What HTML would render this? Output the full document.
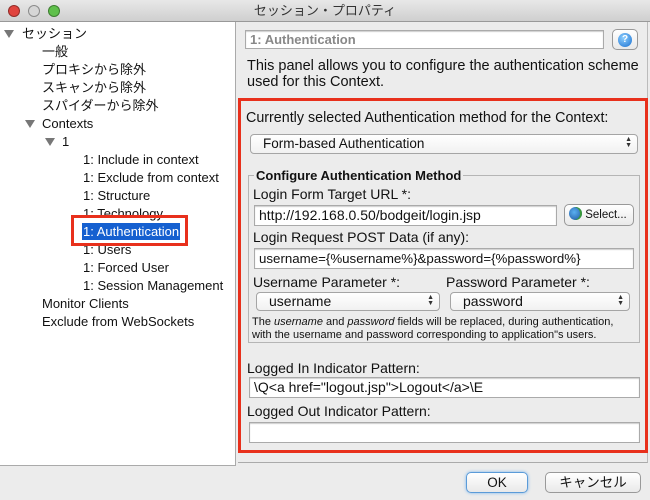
<!DOCTYPE html>
<html><head><meta charset="utf-8"><style>
*{margin:0;padding:0;box-sizing:border-box}
body{width:650px;height:500px;background:#ececec;font-family:"Liberation Sans","Noto Sans CJK JP",sans-serif;font-size:12.5px;color:#111;position:relative;overflow:hidden}
.a{position:absolute;white-space:nowrap}
.title{left:0;top:0;width:650px;height:22px;background:linear-gradient(#e8e8e8,#cfcfcf);border-bottom:1px solid #999;text-align:center;line-height:22px;font-size:13px;color:#333}
.dot{top:5px;width:12px;height:12px;border-radius:50%;border:1px solid rgba(0,0,0,.35)}
.tree{left:0;top:22px;width:236px;height:444px;background:#fff;border-right:1px solid #aaa;border-bottom:1px solid #aaa}
.t{position:absolute;font-size:13px;line-height:18px;white-space:nowrap}
.tri{position:absolute;width:0;height:0;border-left:5px solid transparent;border-right:5px solid transparent;border-top:8px solid #777}
.field{background:#fff;border:1px solid #aaa;box-shadow:inset 0 1px 1px #ccc;padding-left:4px;line-height:19px;font-size:14px}
.combo{background:linear-gradient(#fff,#f1f1f1);border:1px solid #a5a5a5;border-radius:4px;line-height:18px;font-size:13.5px;padding-left:12px}
.arr{position:absolute;right:5px;top:2px;font-size:7px;line-height:6px;color:#333}
.btn{background:linear-gradient(#fff,#e9e9e9);border:1px solid #999;border-radius:5px;text-align:center;font-size:13.5px}
.l{font-size:14px}
</style></head><body>
<div class="a title">セッション・プロパティ</div>
<div class="a dot" style="left:8px;background:#e0443e"></div>
<div class="a dot" style="left:28px;background:#d6d6d6"></div>
<div class="a dot" style="left:48px;background:#5fc04b"></div>

<div class="a tree">
<div class="tri" style="left:4px;top:8px"></div><div class="t" style="left:22px;top:3px">セッション</div>
<div class="t" style="left:42px;top:21px">一般</div>
<div class="t" style="left:42px;top:39px">プロキシから除外</div>
<div class="t" style="left:42px;top:57px">スキャンから除外</div>
<div class="t" style="left:42px;top:75px">スパイダーから除外</div>
<div class="tri" style="left:25px;top:98px"></div><div class="t" style="left:42px;top:93px">Contexts</div>
<div class="tri" style="left:45px;top:116px"></div><div class="t" style="left:62px;top:111px">1</div>
<div class="t" style="left:83px;top:129px">1: Include in context</div>
<div class="t" style="left:83px;top:147px">1: Exclude from context</div>
<div class="t" style="left:83px;top:165px">1: Structure</div>
<div class="t" style="left:83px;top:183px">1: Technology</div>
<div class="t" style="left:82px;top:201px;background:#1560d0;color:#fff;padding:0 1px;height:17px;line-height:17px">1: Authentication</div>
<div class="t" style="left:83px;top:219px">1: Users</div>
<div class="t" style="left:83px;top:237px">1: Forced User</div>
<div class="t" style="left:83px;top:255px">1: Session Management</div>
<div class="t" style="left:42px;top:273px">Monitor Clients</div>
<div class="t" style="left:42px;top:291px">Exclude from WebSockets</div>
<div class="a" style="left:71px;top:193px;width:117px;height:31px;border:3px solid #e8301c"></div>
</div>

<div class="a" style="left:238px;top:22px;width:410px;height:441px;border-bottom:1px solid #aaa;border-right:1px solid #bbb"></div>
<div class="a field" style="left:245px;top:30px;width:359px;height:19px;color:#888;font-weight:bold;line-height:17px;font-size:13px">1: Authentication</div>
<div class="a btn" style="left:612px;top:29px;width:26px;height:21px;border-radius:5px"><div style="margin:3px auto;width:14px;height:14px;border-radius:50%;background:radial-gradient(circle at 40% 35%,#8fd0ff,#1a6fd0);color:#fff;font-size:10px;font-weight:bold;line-height:14px">?</div></div>
<div class="a" style="left:247px;top:58px;font-size:14.5px;line-height:16px">This panel allows you to configure the authentication scheme<br>used for this Context.</div>

<div class="a" style="left:238px;top:98px;width:410px;height:355px;border:3px solid #e8301c"></div>
<div class="a" style="left:246px;top:110px;font-size:14.3px">Currently selected Authentication method for the Context:</div>
<div class="a combo" style="left:250px;top:134px;width:388px;height:20px">Form-based Authentication<span class="arr">▲<br>▼</span></div>

<div class="a" style="left:248px;top:175px;width:392px;height:168px;border:1px solid #b5b5b5"></div>
<div class="a" style="left:254px;top:168px;background:#ececec;padding:0 2px;font-weight:bold;font-size:13px">Configure Authentication Method</div>
<div class="a l" style="left:253px;top:186px">Login Form Target URL *:</div>
<div class="a field" style="left:254px;top:205px;width:303px;height:21px">http://192.168.0.50/bodgeit/login.jsp</div>
<div class="a btn" style="left:564px;top:204px;width:70px;height:22px;font-size:11.5px;line-height:20px;text-align:left;padding-left:4px"><span style="display:inline-block;width:13px;height:13px;border-radius:50%;background:radial-gradient(circle at 40% 40%,#5ab0f0,#1a4f9a);vertical-align:-2px;box-shadow:inset -2px 0 0 #3a9a3a"></span> Select...</div>
<div class="a l" style="left:253px;top:229px">Login Request POST Data (if any):</div>
<div class="a field" style="left:254px;top:248px;width:380px;height:21px;font-size:13.3px">username={%username%}&amp;password={%password%}</div>
<div class="a l" style="left:253px;top:274px">Username Parameter *:</div>
<div class="a l" style="left:446px;top:274px">Password Parameter *:</div>
<div class="a combo" style="left:256px;top:292px;width:184px;height:19px;line-height:17px;font-size:14px">username<span class="arr">▲<br>▼</span></div>
<div class="a combo" style="left:450px;top:292px;width:180px;height:19px;line-height:17px;font-size:14px">password<span class="arr">▲<br>▼</span></div>
<div class="a" style="left:252px;top:316px;font-size:11px;line-height:13px">The <i>username</i> and <i>password</i> fields will be replaced, during authentication,<br>with the username and password corresponding to application"s users.</div>

<div class="a l" style="left:247px;top:360px">Logged In Indicator Pattern:</div>
<div class="a field" style="left:249px;top:377px;width:391px;height:21px">\Q&lt;a href="logout.jsp"&gt;Logout&lt;/a&gt;\E</div>
<div class="a l" style="left:247px;top:403px">Logged Out Indicator Pattern:</div>
<div class="a field" style="left:249px;top:422px;width:391px;height:21px"></div>

<div class="a btn" style="left:466px;top:472px;width:62px;height:21px;line-height:19px;border-color:#5b9bd8;box-shadow:0 0 3px #7ab6ef">OK</div>
<div class="a btn" style="left:545px;top:472px;width:96px;height:21px;line-height:19px">キャンセル</div>
</body></html>
